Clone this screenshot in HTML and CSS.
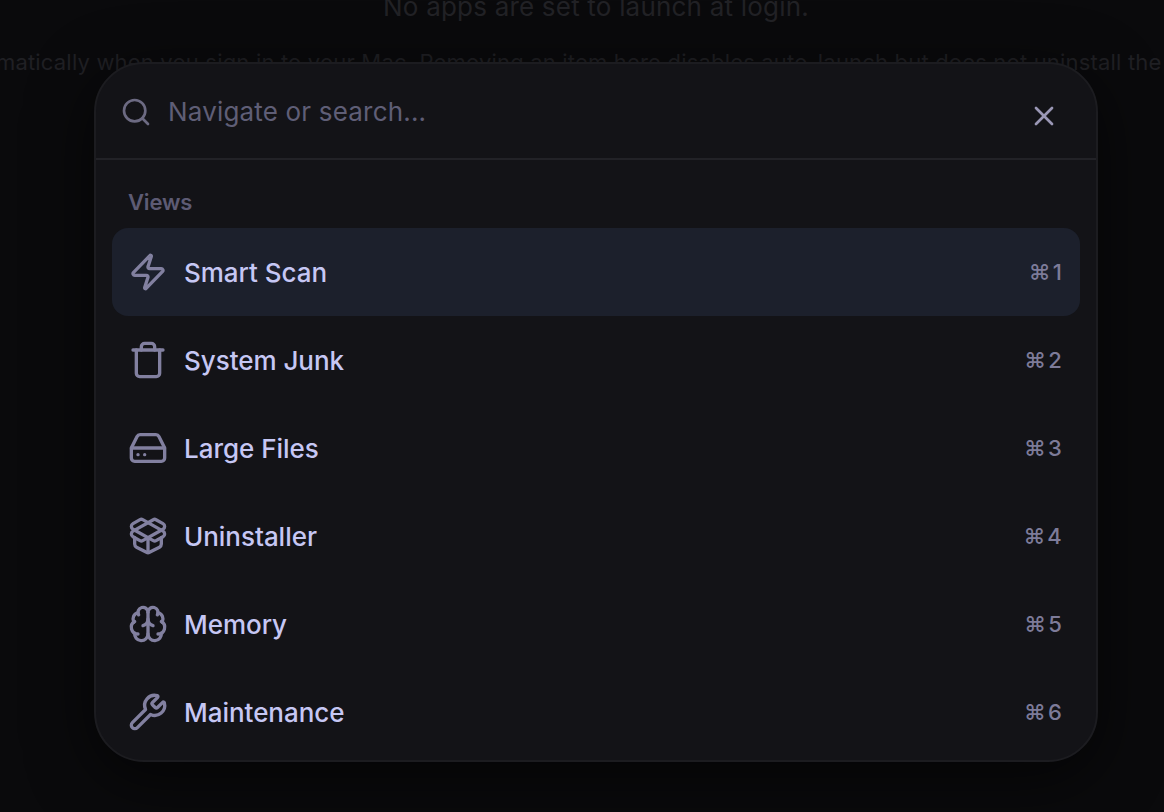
FILE: index.html
```html
<!DOCTYPE html>
<html lang="en">
<head>
    <meta charset="UTF-8">
    <meta name="viewport" content="width=device-width, initial-scale=1.0">
    <title>Command Palette</title>
    <link rel="stylesheet" href="styles.css">
</head>
<body>

<!-- Dimmed page -->
<div class="page">
    <p class="empty-title">No apps are set to launch at login.</p>
    <p class="empty-note">matically when you sign in to your Mac. Removing an item here disables auto-launch but does not uninstall the</p>
</div>

<!-- Command palette -->
<div class="overlay">
    <div class="palette">
        <div class="search">
            <svg class="search-icon" viewBox="0 0 24 24"><circle cx="11" cy="11" r="8"/><path d="m21 21-4.3-4.3"/></svg>
            <span class="placeholder">Navigate or search...</span>
            <svg class="close-icon" viewBox="0 0 24 24"><path d="M18 6 6 18"/><path d="m6 6 12 12"/></svg>
        </div>

        <div class="group">
            <div class="group-title">Views</div>

            <div class="item active">
                <svg class="icon" viewBox="0 0 24 24"><path d="M4 14a1 1 0 0 1-.78-1.63l9.9-10.2a.5.5 0 0 1 .86.46l-1.92 6.02A1 1 0 0 0 13 10h7a1 1 0 0 1 .78 1.63l-9.9 10.2a.5.5 0 0 1-.86-.46l1.92-6.02A1 1 0 0 0 11 14z"/></svg>
                <span class="label">Smart Scan</span>
                <span class="shortcut">⌘1</span>
            </div>
            <div class="item">
                <svg class="icon" viewBox="0 0 24 24"><path d="M19 6v14a2 2 0 0 1-2 2H7a2 2 0 0 1-2-2V6"/><path d="M3 6h18"/><path d="M8 6V4a2 2 0 0 1 2-2h4a2 2 0 0 1 2 2v2"/></svg>
                <span class="label">System Junk</span>
                <span class="shortcut">⌘2</span>
            </div>
            <div class="item">
                <svg class="icon" viewBox="0 0 24 24"><path d="M10 16h.01"/><path d="M2.212 11.577a2 2 0 0 0-.212.896V18a2 2 0 0 0 2 2h16a2 2 0 0 0 2-2v-5.527a2 2 0 0 0-.212-.896L18.55 5.11A2 2 0 0 0 16.76 4H7.24a2 2 0 0 0-1.79 1.11z"/><path d="M21.946 12.013H2.054"/><path d="M6 16h.01"/></svg>
                <span class="label">Large Files</span>
                <span class="shortcut">⌘3</span>
            </div>
            <div class="item">
                <svg class="icon" viewBox="0 0 24 24"><path d="M12 22v-9"/><path d="M15.17 2.21a1.67 1.67 0 0 1 1.63 0L21 4.57a1.93 1.93 0 0 1 0 3.36L8.82 14.79a1.655 1.655 0 0 1-1.64 0L3 12.43a1.93 1.93 0 0 1 0-3.36z"/><path d="M20 13v3.87a2.06 2.06 0 0 1-1.11 1.83l-6 3.08a1.93 1.93 0 0 1-1.78 0l-6-3.08A2.06 2.06 0 0 1 4 16.87V13"/><path d="M21 12.43a1.93 1.93 0 0 0 0-3.36L8.83 2.2a1.64 1.64 0 0 0-1.63 0L3 4.57a1.93 1.93 0 0 0 0 3.36l12.18 6.86a1.636 1.636 0 0 0 1.63 0z"/></svg>
                <span class="label">Uninstaller</span>
                <span class="shortcut">⌘4</span>
            </div>
            <div class="item">
                <svg class="icon" viewBox="0 0 24 24"><path d="M12 18V5"/><path d="M15 13a4.17 4.17 0 0 1-3-4 4.17 4.17 0 0 1-3 4"/><path d="M17.598 6.5A3 3 0 1 0 12 5a3 3 0 1 0-5.598 1.5"/><path d="M17.997 5.125a4 4 0 0 1 2.526 5.77"/><path d="M18 18a4 4 0 0 0 2-7.464"/><path d="M19.967 17.483A4 4 0 1 1 12 18a4 4 0 1 1-7.967-.517"/><path d="M6 18a4 4 0 0 1-2-7.464"/><path d="M6.003 5.125a4 4 0 0 0-2.526 5.77"/></svg>
                <span class="label">Memory</span>
                <span class="shortcut">⌘5</span>
            </div>
            <div class="item">
                <svg class="icon" viewBox="0 0 24 24"><path d="M14.7 6.3a1 1 0 0 0 0 1.4l1.6 1.6a1 1 0 0 0 1.4 0l3.106-3.105c.32-.322.863-.22.983.218a6 6 0 0 1-8.259 7.057l-7.91 7.91a1 1 0 0 1-2.999-3l7.91-7.91a6 6 0 0 1 7.057-8.259c.438.12.54.662.219.984z"/></svg>
                <span class="label">Maintenance</span>
                <span class="shortcut">⌘6</span>
            </div>
        </div>
    </div>
</div>

</body>
</html>
```
FILE: styles.css
```css
* {
    box-sizing: border-box;
}
body {
    margin: 0;
    height: 812px;
    overflow: hidden;
    background-color: #0a0a0c;
    font-family: Inter, "Liberation Sans", sans-serif;
}
.page {
    height: 812px;
    overflow: hidden;
    white-space: nowrap;
}
.empty-title {
    margin: -11px 0 0;
    padding-left: 28px;
    text-align: center;
    font-size: 26px;
    line-height: 36px;
    letter-spacing: 0.2px;
    color: #222226;
}
.empty-note {
    margin: 21px 0 0 -4px;
    font-size: 22px;
    line-height: 32px;
    letter-spacing: 0.18px;
    color: #202024;
}
.overlay {
    position: absolute;
    inset: 0;
    padding: 62px 66px 0 94px;
}
.palette {
    height: 700px;
    border: 2px solid #1c1c20;
    border-radius: 50px;
    background-color: #131317;
    box-shadow: 0 16px 64px rgba(0, 0, 0, 0.6);
    overflow: hidden;
}
.search {
    display: flex;
    align-items: center;
    gap: 16px;
    height: 96px;
    padding: 2px 36px 0 24px;
    border-bottom: 2px solid #222227;
}
svg {
    flex: none;
    fill: none;
    stroke-width: 2;
    stroke-linecap: round;
    stroke-linejoin: round;
}
.search-icon {
    width: 32px;
    height: 32px;
    stroke: #6c6a82;
}
.placeholder {
    flex: 1;
    margin-top: -2px;
    font-size: 26px;
    letter-spacing: 0.18px;
    color: #5f5e76;
}
.close-icon {
    width: 32px;
    height: 32px;
    margin-top: 8px;
    stroke: #9a97b5;
}
.group {
    padding: 16px;
}
.group-title {
    padding: 10px 16px;
    height: 52px;
    font-size: 22px;
    line-height: 32px;
    font-weight: 600;
    letter-spacing: -0.15px;
    color: #5d5b74;
}
.item {
    display: flex;
    align-items: center;
    gap: 16px;
    height: 88px;
    padding: 0 16px;
    border-radius: 16px;
}
.item.active {
    background-color: #1c202c;
}
.icon {
    width: 40px;
    height: 40px;
    stroke: #8280a0;
}
.label {
    flex: 1;
    font-size: 26px;
    letter-spacing: -0.03px;
    font-weight: 500;
    color: #c6c7f4;
}
.shortcut {
    font-size: 22px;
    font-weight: 500;
    letter-spacing: 2.2px;
    color: #7d7b99;
}
```
